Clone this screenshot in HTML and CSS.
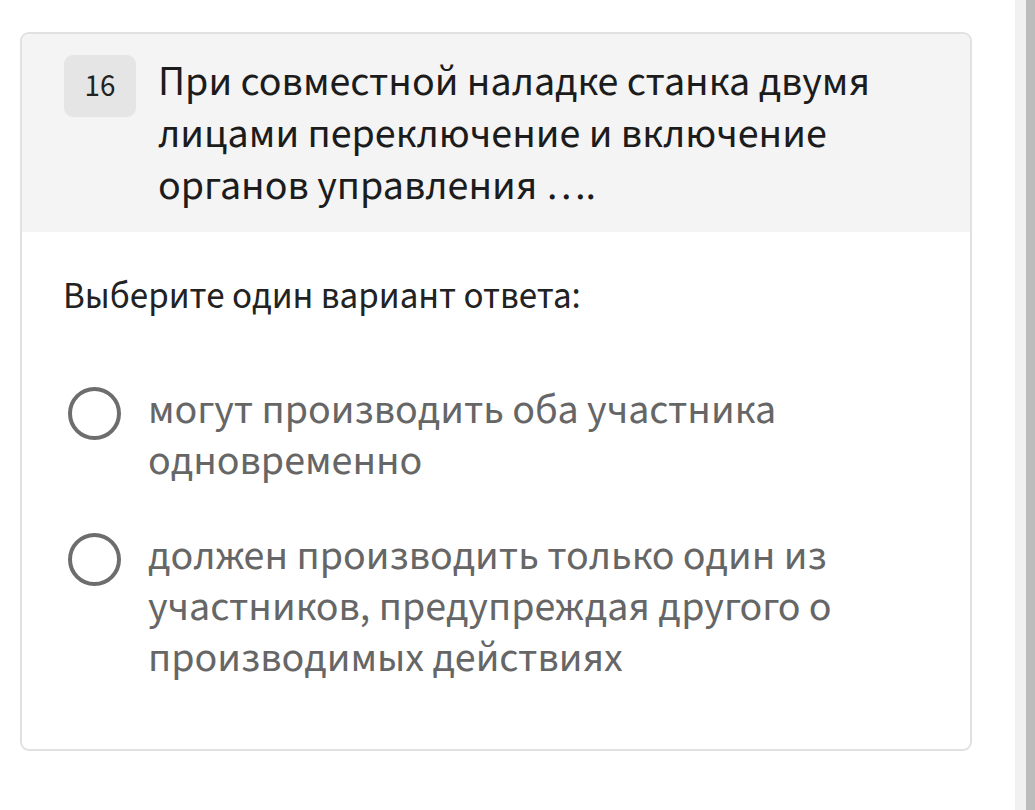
FILE: index.html
```html
<!DOCTYPE html>
<html lang="ru">
<head>
<meta charset="utf-8">
<title>Вопрос 16</title>
<link rel="stylesheet" href="styles.css">
</head>
<body>
  <div class="page">
    <main class="content">
      <section class="question-card">
        <header class="question-head">
          <div class="question-num">16</div>
          <h2 class="question-text">При совместной наладке станка двумя лицами переключение и включение органов управления ….</h2>
        </header>
        <div class="question-body">
          <p class="question-hint">Выберите один вариант ответа:</p>
          <ul class="answers">
            <li class="answer">
              <span class="radio"></span>
              <span class="answer-text">могут производить оба участника одновременно</span>
            </li>
            <li class="answer">
              <span class="radio"></span>
              <span class="answer-text">должен производить только один из участников, предупреждая другого о производимых действиях</span>
            </li>
          </ul>
        </div>
      </section>
    </main>
    <div class="scrollbar"><div class="scrollbar-thumb"></div></div>
  </div>
</body>
</html>
```
FILE: styles.css
```css
* { box-sizing: border-box; }

html, body {
  margin: 0;
  height: 100%;
  background: #fff;
  font-family: "Source Sans 3", "Open Sans", sans-serif;
}

.page {
  display: flex;
  height: 100%;
}

.content {
  flex: 1;
  padding: 32px 43px 0 20px;
}

.question-card {
  border: 2px solid #e1e1e1;
  border-radius: 9px;
  overflow: hidden;
  box-shadow: 0 0 1px rgba(0, 0, 0, 0.04);
}

.question-head {
  display: flex;
  align-items: flex-start;
  gap: 22px;
  background: #f4f4f4;
  padding: 21px 40px 20px 42px;
}

.question-num {
  flex: none;
  width: 72px;
  height: 62px;
  border-radius: 9px;
  background: #e5e5e5;
  color: #222;
  font-size: 31px;
  display: flex;
  align-items: center;
  justify-content: center;
}

.question-text {
  margin: 1px 0 0;
  font-size: 42px;
  font-weight: 400;
  line-height: 52px;
  color: #1c1c1c;
}

.question-body {
  padding: 43px 40px 65px 41px;
}

.question-hint {
  margin: 0;
  font-size: 37px;
  line-height: 44px;
  color: #222;
}

.answers {
  list-style: none;
  margin: 66px 0 0;
  padding: 0 0 0 5px;
  display: flex;
  flex-direction: column;
  gap: 44px;
}

.answer {
  display: flex;
  align-items: flex-start;
  gap: 27px;
}

.radio {
  flex: none;
  width: 53px;
  height: 53px;
  margin-top: 2px;
  border: 4px solid #6d6d6d;
  border-radius: 50%;
}

.answer-text {
  font-size: 42px;
  line-height: 51px;
  color: #666;
}

.scrollbar {
  flex: none;
  width: 20px;
  background: #f1f1f1;
  display: flex;
  justify-content: flex-end;
}

.scrollbar-thumb {
  width: 9px;
  background: #bcbcbc;
}
```
